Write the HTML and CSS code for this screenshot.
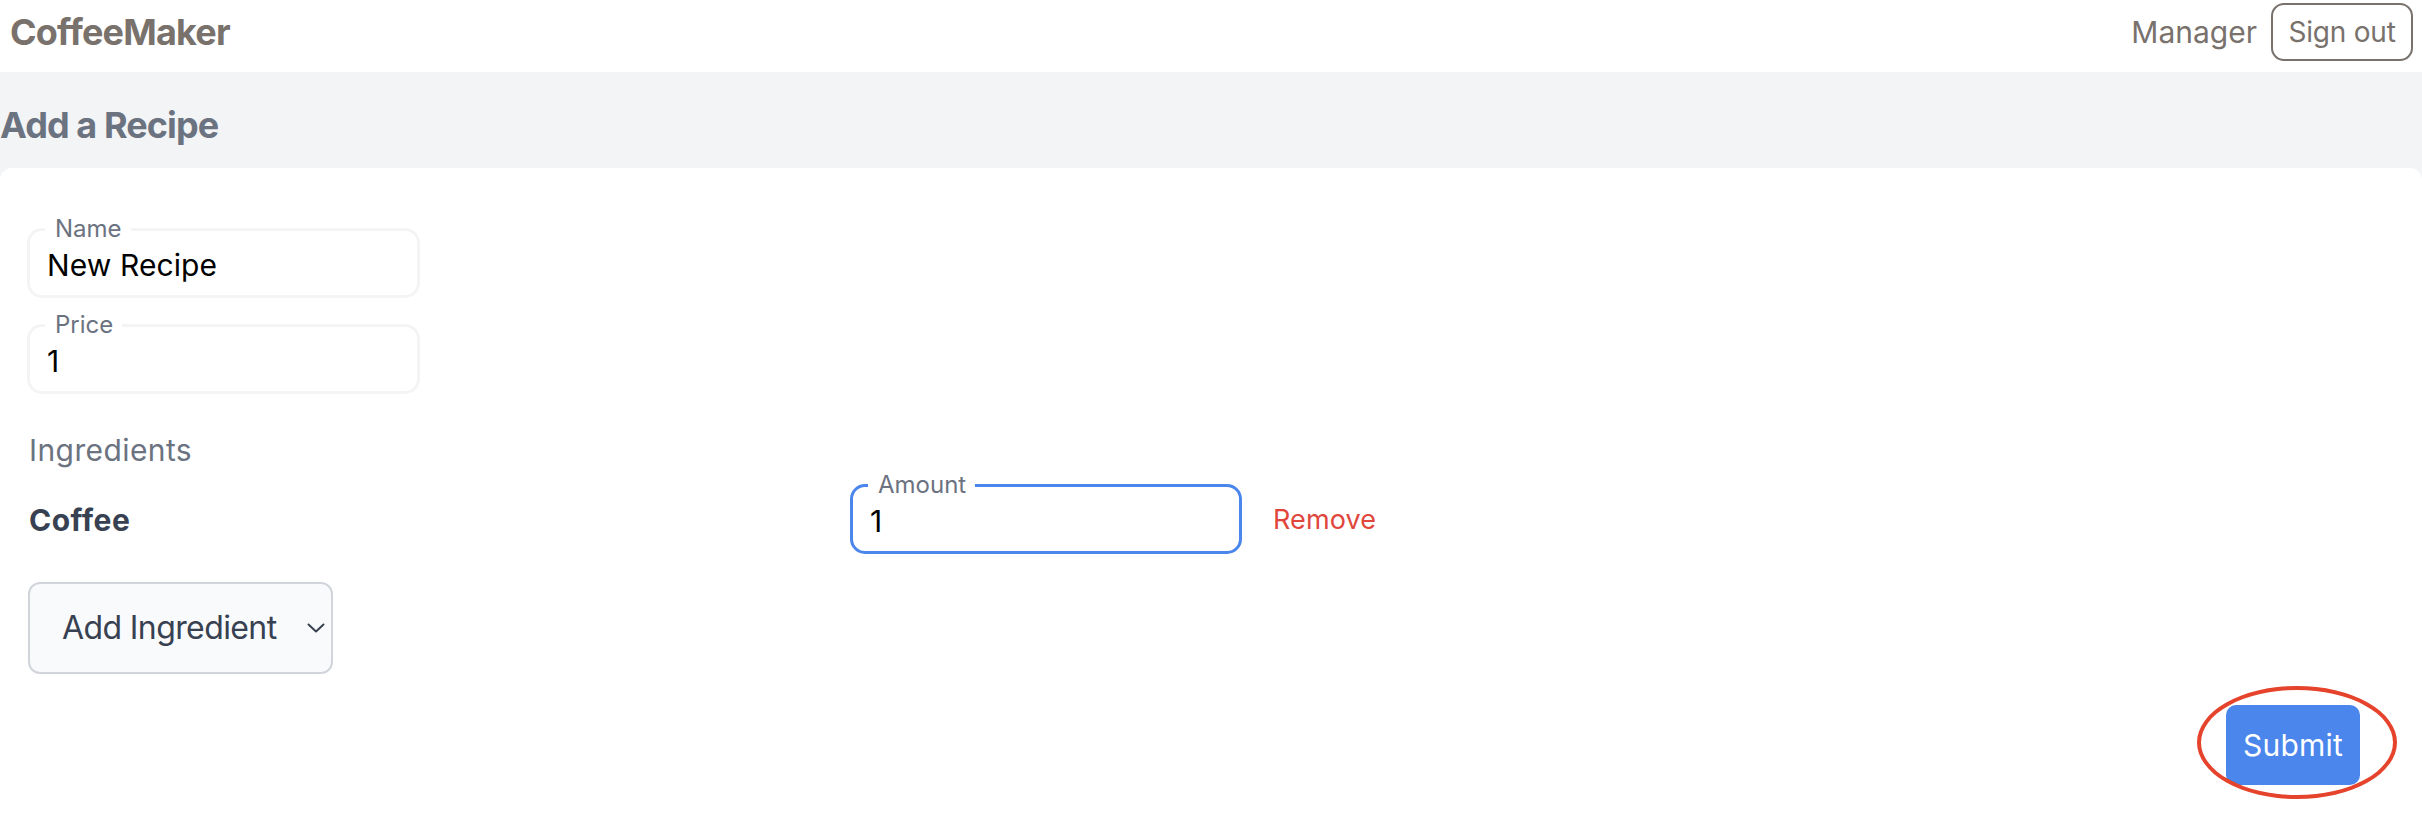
FILE: index.html
```html
<!DOCTYPE html>
<html lang="en">
<head>
<meta charset="utf-8">
<title>CoffeeMaker</title>
<link rel="stylesheet" href="styles.css">
</head>
<body>
<header class="topbar">
  <div class="brand">CoffeeMaker</div>
  <div class="user">
    <span class="role">Manager</span>
    <button class="signout">Sign out</button>
  </div>
</header>
<main class="page">
  <h1 class="title">Add a Recipe</h1>
  <section class="card">
    <fieldset class="field">
      <legend class="field-label">Name</legend>
      <div class="field-input">New Recipe</div>
    </fieldset>
    <fieldset class="field field-price">
      <legend class="field-label">Price</legend>
      <div class="field-input">1</div>
    </fieldset>
    <div class="ing-title">Ingredients</div>
    <div class="ing-row">
      <div class="ing-name">Coffee</div>
      <fieldset class="field field-amount">
        <legend class="field-label">Amount</legend>
        <div class="field-input">1</div>
      </fieldset>
      <div class="remove">Remove</div>
    </div>
    <div class="select">
      <span class="select-text">Add Ingredient</span>
      <svg class="chev" width="18" height="10" viewBox="0 0 18 10"><path d="M1.5 1.5 L9 8.5 L16.5 1.5" fill="none" stroke="#374151" stroke-width="2" stroke-linecap="round" stroke-linejoin="round"/></svg>
    </div>
    <div class="actions">
      <div class="submit-wrap">
        <button class="submit">Submit</button>
        <div class="circle"></div>
      </div>
    </div>
  </section>
</main>
</body>
</html>
```

FILE: styles.css
```css
* { box-sizing: border-box; }
html, body { margin: 0; padding: 0; }
body {
  font-family: Inter, "Noto Sans", sans-serif;
  background: #f3f4f6;
  width: 2422px;
  height: 840px;
  overflow: hidden;
}
.topbar {
  height: 72px;
  background: #ffffff;
  display: flex;
  align-items: center;
  justify-content: space-between;
  padding: 0 9px 8px 10px;
}
.brand {
  font-size: 36px;
  font-weight: 700;
  color: #78716c;
  line-height: 44px;
  letter-spacing: -0.8px;
}
.user { display: flex; align-items: center; gap: 14px; }
.role {
  font-size: 30px;
  color: #78716c;
  line-height: 36px;
  letter-spacing: 0;
}
.signout {
  font-family: inherit;
  font-size: 28px;
  color: #78716c;
  background: #ffffff;
  border: 2px solid #78716c;
  border-radius: 13px;
  height: 58px;
  width: 142px;
  padding: 0;
  line-height: 36px;
  letter-spacing: -0.2px;
}
.page { background: #f3f4f6; }
.title {
  margin: 0;
  padding: 31px 0 21px 0;
  font-size: 36px;
  line-height: 44px;
  font-weight: 700;
  color: #6b7280;
  letter-spacing: -0.9px;
}
.card {
  background: #ffffff;
  border-radius: 12px 12px 0 0;
  height: 672px;
  padding: 47px 62px 0 27px;
  display: flex;
  flex-direction: column;
  align-items: flex-start;
}
.field {
  margin: 0;
  width: 393px;
  border: 3px solid #f3f4f6;
  border-radius: 15px;
  padding: 4px 15px 12px 15px;
  min-width: 0;
}
.field-price { margin-top: 13px; }
.field-label {
  font-size: 24px;
  line-height: 28px;
  color: #6b7280;
  padding: 0 9px 0 10px;
  margin-left: 0;
}
.field-input {
  font-size: 30px;
  line-height: 36px;
  color: #000000;
  padding-left: 2px;
  letter-spacing: 0.1px;
}
.ing-title {
  margin-top: 38px;
  padding-left: 2px;
  font-size: 30px;
  line-height: 36px;
  color: #6b7280;
  letter-spacing: 0.4px;
}
.ing-row {
  display: flex;
  align-items: flex-start;
  margin-top: 3px;
}
.ing-name {
  width: 823px;
  margin-top: 31px;
  padding-left: 2px;
  font-size: 30px;
  line-height: 36px;
  font-weight: 700;
  color: #374151;
  letter-spacing: 0.5px;
}
.field-amount {
  width: 392px;
  border-color: #4a86ec;
}
.remove {
  margin-left: 31px;
  margin-top: 33px;
  font-size: 27px;
  line-height: 32px;
  color: #e0463c;
  letter-spacing: 0.1px;
}
.select {
  margin-top: 28px;
  margin-left: 1px;
  width: 305px;
  height: 92px;
  border: 2px solid #d1d5db;
  border-radius: 12px;
  background: #f9fafb;
  display: flex;
  align-items: center;
  justify-content: space-between;
  padding: 0 6px 0 32px;
}
.select-text {
  font-size: 32px;
  line-height: 38px;
  color: #374151;
  letter-spacing: -0.6px;
}
.actions {
  align-self: stretch;
  display: flex;
  justify-content: flex-end;
  margin-top: 31px;
}
.submit-wrap { position: relative; }
.submit {
  font-family: inherit;
  display: block;
  width: 134px;
  height: 80px;
  border: none;
  border-radius: 10px;
  background: #4a86ec;
  color: #ffffff;
  font-size: 30px;
  line-height: 36px;
  padding: 0;
  letter-spacing: 0.2px;
}
.circle {
  position: absolute;
  left: -29px;
  top: -19px;
  width: 200px;
  height: 113px;
  border: 4px solid #e5432b;
  border-radius: 50%;
  pointer-events: none;
}
```
